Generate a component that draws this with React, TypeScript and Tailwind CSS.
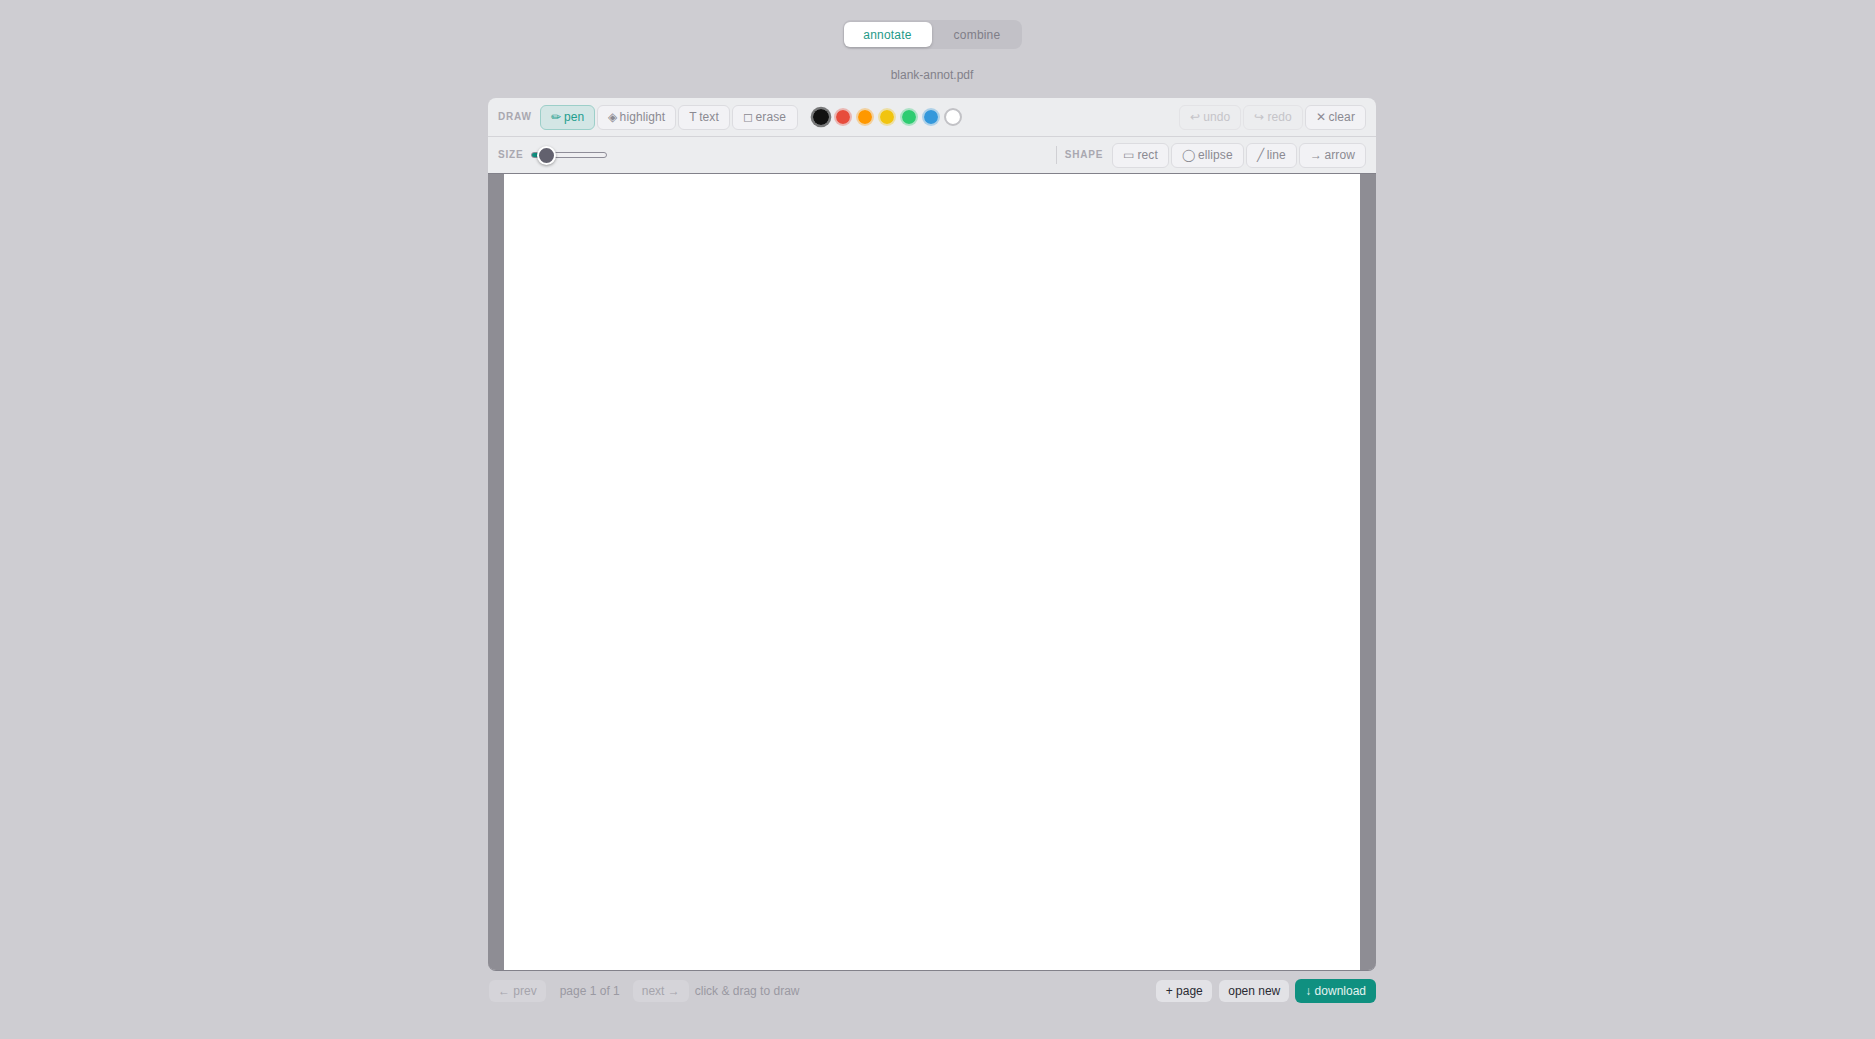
import React from 'react'

const btn =
  'h-[25px] px-[10px] flex items-center gap-[3px] rounded-[6px] border border-[#dcdce0] bg-[#f2f2f5] text-[#8b8a92] text-[12px] tracking-[0.1px] leading-none whitespace-nowrap'
const btnTight =
  'h-[25px] px-[10px] flex items-center gap-[2.5px] rounded-[6px] border border-[#dcdce0] bg-[#f2f2f5] text-[#8b8a92] text-[12px] tracking-[0.1px] leading-none whitespace-nowrap'
const btnOff =
  'h-[25px] px-[10px] flex items-center gap-[3px] rounded-[6px] border border-[#e3e3e6] text-[#c5c4c9] text-[12px] tracking-[0.1px] leading-none whitespace-nowrap'
const label = 'text-[10px] font-bold tracking-[0.8px] text-[#a9a8b0] leading-none'

const swatches = [
  'bg-[#e74c3c] border-[#e74c3c55]',
  'bg-[#ff9800] border-[#ff980055]',
  'bg-[#f1c40f] border-[#f1c40f55]',
  'bg-[#2ecc71] border-[#2ecc7155]',
  'bg-[#3498db] border-[#3498db55]',
  'bg-white border-[#c2c2c6]',
]

export default function App() {
  return (
    <div className="min-h-[1039px] bg-[#cecdd2] font-['Liberation_Sans',Arial,sans-serif] pr-[11px] flex flex-col items-center pt-[20px]">
      {/* mode tabs */}
      <div className="flex h-[29px] w-[179px] items-center rounded-[8px] bg-[#c2c1c7] p-[2px] pl-[1px] text-[12px] tracking-[0.2px]">
        <div className="flex h-[25px] w-[88px] items-center justify-center rounded-[6px] bg-white text-[#1f9a88] shadow-[0_1px_3px_rgba(0,0,0,0.2)]">
          annotate
        </div>
        <div className="flex flex-1 items-center justify-center pl-[3px] text-[#7f7e87]">combine</div>
      </div>

      <div className="mt-[19px] text-[12px] leading-[14px] text-[#82818a]">blank-annot.pdf</div>

      <div className="mt-[16px] w-[888px] overflow-hidden rounded-[8px] border-b border-[#82818a]">
        {/* draw row */}
        <div className="flex h-[39px] items-center border-b border-[#d4d4d8] bg-[#ecedef] pl-[10px] pr-[10px]">
          <span className={label + ' w-[42px]'}>DRAW</span>
          <div className="flex gap-[2px]">
            <button className="h-[25px] w-[55px] flex items-center justify-center gap-[3px] rounded-[6px] border border-[#9ccfc9] bg-[#d3e6e5] text-[#1f9e8e] text-[12px] tracking-[0.1px] leading-none">
              <span>✏</span> pen
            </button>
            <button className={btnTight}>
              <span>◈</span> highlight
            </button>
            <button className={btnTight}>
              <span>T</span> text
            </button>
            <button className={btnTight + ' w-[66px]'}>
              <span>◻</span> erase
            </button>
          </div>
          <div className="ml-[14px] flex items-center gap-[4px]">
            <div className="h-[18px] w-[18px] scale-[1.15] rounded-full border-2 border-[#11111188] bg-[#111111] bg-clip-padding" />
            {swatches.map((s) => (
              <div key={s} className={'h-[18px] w-[18px] rounded-full border-2 bg-clip-padding ' + s} />
            ))}
          </div>
          <div className="ml-auto flex gap-[2px]">
            <button className={btnOff}>
              <span>↩</span> undo
            </button>
            <button className={btnOff}>
              <span>↪</span> redo
            </button>
            <button className={btnTight}>
              <span>✕</span> clear
            </button>
          </div>
        </div>

        {/* size + shape row */}
        <div className="flex h-[37px] items-center border-b border-[#82818a] bg-[#ecedef] pl-[10px] pr-[10px]">
          <span className={label + ' w-[33px]'}>SIZE</span>
          <input
            type="range"
            min={1}
            max={24}
            defaultValue={3}
            className="h-[6px] w-[76px] appearance-none rounded-[3px] border border-[#8e8d98] bg-[linear-gradient(to_right,#0f9080_10%,#efeff1_10%)] [&::-webkit-slider-thumb]:h-[19px] [&::-webkit-slider-thumb]:w-[19px] [&::-webkit-slider-thumb]:appearance-none [&::-webkit-slider-thumb]:rounded-full [&::-webkit-slider-thumb]:border-[2px] [&::-webkit-slider-thumb]:border-white [&::-webkit-slider-thumb]:bg-[#62616e] [&::-webkit-slider-thumb]:shadow-[0_1px_3px_rgba(0,0,0,0.35)]"
          />
          <div className="ml-auto h-[18px] w-px bg-[#d0d0d4]" />
          <span className={label + ' ml-[8px] mr-[9px]'}>SHAPE</span>
          <div className="flex gap-[2px]">
            <button className={btn}>
              <span>▭</span> rect
            </button>
            <button className={btn}>
              <span>◯</span> ellipse
            </button>
            <button className={btn}>
              <span>╱</span> line
            </button>
            <button className={btnTight}>
              <span>→</span> arrow
            </button>
          </div>
        </div>

        {/* page */}
        <div className="flex h-[796px] justify-center bg-[#8e8d94]">
          <div className="h-full w-[856px] bg-white" />
        </div>
      </div>

      {/* footer */}
      <div className="mt-[8px] flex h-[24px] w-[888px] items-center text-[12px] leading-none">
        <button className="ml-[1px] h-[22px] rounded-[6px] bg-[#d5d4d9] px-[9px] text-[#a5a4ac]">← prev</button>
        <span className="ml-[14px] text-[#9a99a2]">page 1 of 1</span>
        <button className="ml-[13px] h-[22px] rounded-[6px] bg-[#d5d4d9] px-[9px] text-[#a5a4ac]">next →</button>
        <span className="ml-[6px] text-[#9a99a2]">click &amp; drag to draw</span>
        <button className="ml-auto h-[22px] rounded-[6px] bg-[#e2e2e6] px-[9.5px] text-[#2a2a33]">+ page</button>
        <button className="ml-[7px] h-[22px] rounded-[6px] bg-[#e2e2e6] px-[9px] text-[#2a2a33]">open new</button>
        <button className="ml-[6px] h-[24px] rounded-[6px] bg-[#0f9080] px-[10px] text-[#e4f3f1]">↓ download</button>
      </div>
    </div>
  )
}
